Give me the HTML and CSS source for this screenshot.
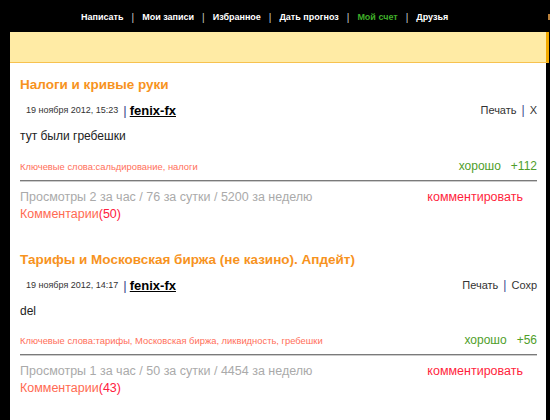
FILE: index.html
```html
<!DOCTYPE html>
<html lang="ru">
<head>
<meta charset="utf-8">
<link rel="stylesheet" href="styles.css">
</head>
<body>
<nav class="nav">
  <a class="nav-item">Написать</a><span class="nav-sep">|</span>
  <a class="nav-item">Мои записи</a><span class="nav-sep">|</span>
  <a class="nav-item">Избранное</a><span class="nav-sep">|</span>
  <a class="nav-item">Дать прогноз</a><span class="nav-sep">|</span>
  <a class="nav-item nav-green">Мой счет</a><span class="nav-sep">|</span>
  <a class="nav-item">Друзья</a>
  <span class="nav-edge"></span>
</nav>
<div class="notice"></div>
<main class="content">
  <article class="post">
    <h2 class="post-title">Налоги и кривые руки</h2>
    <div class="meta">
      <div class="meta-left"><span class="date">19 ноября 2012, 15:23</span><span class="meta-sep">|</span><a class="author">fenix-fx</a></div>
      <div class="meta-right"><a class="tool">Печать</a><span class="meta-sep small">|</span><a class="tool">X</a></div>
    </div>
    <p class="post-body">тут были гребешки</p>
    <div class="footer">
      <span class="tags">Ключевые слова:сальдирование, налоги</span>
      <span class="rating"><span>хорошо</span><span>+112</span></span>
    </div>
    <div class="rule"></div>
    <div class="stats">
      <span class="views">Просмотры 2 за час / 76 за сутки / 5200 за неделю</span>
      <a class="comment-link">комментировать</a>
    </div>
    <div class="comments">Комментарии<span class="count">(50)</span></div>
  </article>
  <article class="post post-second">
    <h2 class="post-title">Тарифы и Московская биржа (не казино). Апдейт)</h2>
    <div class="meta">
      <div class="meta-left"><span class="date">19 ноября 2012, 14:17</span><span class="meta-sep">|</span><a class="author">fenix-fx</a></div>
      <div class="meta-right"><a class="tool">Печать</a><span class="meta-sep small">|</span><a class="tool">Сохр</a></div>
    </div>
    <p class="post-body">del</p>
    <div class="footer footer-tight">
      <span class="tags">Ключевые слова:тарифы, Московская биржа, ликвидность, гребешки</span>
      <span class="rating"><span>хорошо</span><span>+56</span></span>
    </div>
    <div class="rule"></div>
    <div class="stats">
      <span class="views">Просмотры 1 за час / 50 за сутки / 4454 за неделю</span>
      <a class="comment-link">комментировать</a>
    </div>
    <div class="comments">Комментарии<span class="count">(43)</span></div>
  </article>
</main>
</body>
</html>
```

FILE: styles.css
```css
html, body {
  margin: 0;
  padding: 0;
  background: #000;
  font-family: "Liberation Sans", Arial, sans-serif;
  overflow: hidden;
}

.nav {
  height: 32px;
  display: flex;
  align-items: center;
  padding-left: 81px;
  padding-top: 2px;
  box-sizing: border-box;
  color: #fff;
  font-size: 9px;
  font-weight: bold;
  position: relative;
}
.nav-item { color: #fff; }
.nav-green { color: #3fae29; }
.nav-sep {
  font-weight: normal;
  font-size: 10px;
  color: #ccc;
  padding: 0 8px;
}
.nav-edge {
  position: absolute;
  left: 548px;
  top: 14px;
  width: 2px;
  height: 6px;
  background: #b9803a;
}

.notice {
  margin-left: 10px;
  width: 536px;
  height: 30px;
  background: #ffeba5;
  border-bottom: 1px solid #f7c24f;
  border-right: 3px solid #f2a900;
}

.content {
  margin-left: 10px;
  width: 517px;
  padding: 13px 9px 40px 10px;
  background: #fff;
}

.post { color: #222; }
.post-second { margin-top: 29px; }

.post-title {
  margin: 0;
  font-size: 13.5px;
  line-height: 18px;
  font-weight: bold;
  color: #f7931e;
}

.meta {
  margin-top: 6px;
  height: 20px;
  display: flex;
  justify-content: space-between;
  align-items: center;
}
.meta-left {
  display: flex;
  align-items: center;
  padding-left: 6px;
}
.date {
  font-size: 9px;
  color: #333;
}
.meta-sep {
  font-size: 13px;
  color: #3b4a8c;
  padding: 0 3px 0 5px;
}
.meta-sep.small { font-size: 12px; padding: 0 5px 0 5px; }
.author {
  font-size: 13px;
  font-weight: bold;
  color: #000;
  text-decoration: underline;
}
.meta-right {
  display: flex;
  align-items: center;
}
.tool {
  font-size: 11px;
  color: #333;
}

.post-body {
  margin: 8px 0 0;
  font-size: 12px;
  line-height: 16px;
  color: #222;
}

.footer {
  margin-top: 14px;
  height: 16px;
  display: flex;
  justify-content: space-between;
  align-items: center;
}
.footer-tight { margin-top: 13px; }
.tags {
  font-size: 9.4px;
  color: #ff6f5a;
}
.rating {
  display: flex;
  gap: 10px;
  font-size: 12px;
  color: #4f9e2a;
}

.rule {
  margin-top: 6px;
  height: 1px;
  border-top: 1px solid #7a7a7a;
  background: #ccc;
}

.stats {
  margin-top: 7px;
  height: 16px;
  display: flex;
  justify-content: space-between;
  align-items: center;
  font-size: 12.5px;
}
.views { color: #aaa; }
.comment-link {
  color: #ff1f3d;
  padding-right: 14px;
}

.comments {
  margin-top: 1px;
  font-size: 12.5px;
  line-height: 16px;
  color: #ff6a52;
}
.count { color: #ff2040; }
```
